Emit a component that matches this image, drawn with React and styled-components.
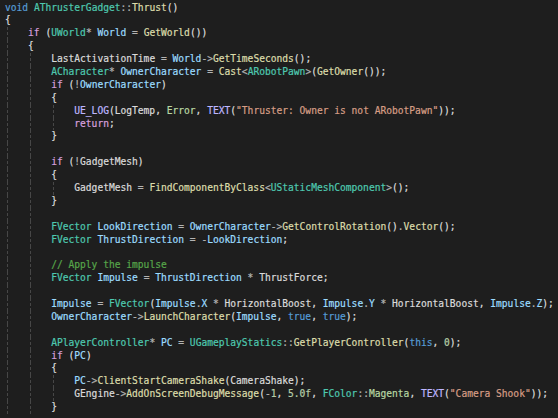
import React from 'react'
import styled, { createGlobalStyle } from 'styled-components'

const GlobalStyle = createGlobalStyle`
  html, body {
    margin: 0;
    padding: 0;
    background: #1e1e1e;
  }
`

const colors = {
  keyword: '#569cd6',
  control: '#d8a0df',
  type: '#4ec9b0',
  func: '#dcdcaa',
  local: '#9cdcfe',
  member: '#dadada',
  macro: '#beb7ff',
  enum: '#b8d7a3',
  string: '#d69d85',
  number: '#b5cea8',
  comment: '#57a64a',
  op: '#b4b4b4',
  punct: '#dcdcdc',
  plain: '#dcdcdc'
}

const Editor = styled.div`
  width: 558px;
  height: 418px;
  overflow: hidden;
  box-sizing: border-box;
  padding: 1.5px 0 0 5px;
  background: #1e1e1e;
  font-family: 'DejaVu Sans Mono', 'Liberation Mono', monospace;
  font-size: 9.6px;
  line-height: 12.9px;
  white-space: pre;
  -webkit-text-stroke: 0.2px;
`

const Line = styled.div`
  display: flex;
  height: 12.9px;
`

const Indent = styled.span`
  flex: none;
  width: 4ch;
  background-image: repeating-linear-gradient(to bottom, #474747 0 3px, transparent 3px 5px);
  background-size: 1px 100%;
  background-position: 2px 0;
  background-repeat: no-repeat;
`

const Token = styled.span`
  color: ${p => colors[p.$kind] || colors.plain};
`

const keywords = ['void', 'true', 'this']
const control = ['if', 'return']
const types = ['AThrusterGadget', 'UWorld', 'ACharacter', 'ARobotPawn', 'UStaticMeshComponent', 'FVector', 'APlayerController', 'UGameplayStatics', 'FColor']
const macros = ['UE_LOG', 'TEXT']
const enums = ['Error', 'Magenta']
const locals = ['World', 'OwnerCharacter', 'LookDirection', 'ThrustDirection', 'Impulse', 'PC', 'X', 'Y', 'Z']
const members = ['LastActivationTime', 'GadgetMesh', 'ThrustForce', 'HorizontalBoost', 'CameraShake', 'LogTemp', 'GEngine']

// very small tokenizer, just enough for this snippet
const tokenize = src => {
  const out = []
  const re = /(\/\/.*$)|("[^"]*")|(\d+(?:\.\d+)?f?)|([A-Za-z_]\w*)|(->|::|[=*!<>\-.])|([(){};,])|(\s+)/g
  let m
  while ((m = re.exec(src))) {
    const [text, comment, str, num, word, op, punct] = m
    let kind = 'plain'
    if (comment) kind = 'comment'
    else if (str) kind = 'string'
    else if (num) kind = 'number'
    else if (word) {
      const next = src[re.lastIndex]
      if (keywords.includes(word)) kind = 'keyword'
      else if (control.includes(word)) kind = 'control'
      else if (types.includes(word)) kind = 'type'
      else if (macros.includes(word)) kind = 'macro'
      else if (enums.includes(word)) kind = 'enum'
      else if (locals.includes(word)) kind = 'local'
      else if (members.includes(word)) kind = 'member'
      else if (next === '(' || next === '<') kind = 'func'
      else kind = 'member'
    } else if (op) kind = 'op'
    else if (punct) kind = 'punct'
    out.push({ text, kind })
  }
  return out
}

const code = [
  [0, 'void AThrusterGadget::Thrust()'],
  [0, '{'],
  [1, 'if (UWorld* World = GetWorld())'],
  [1, '{'],
  [2, 'LastActivationTime = World->GetTimeSeconds();'],
  [2, 'ACharacter* OwnerCharacter = Cast<ARobotPawn>(GetOwner());'],
  [2, 'if (!OwnerCharacter)'],
  [2, '{'],
  [3, 'UE_LOG(LogTemp, Error, TEXT("Thruster: Owner is not ARobotPawn"));'],
  [3, 'return;'],
  [2, '}'],
  [2, ''],
  [2, 'if (!GadgetMesh)'],
  [2, '{'],
  [3, 'GadgetMesh = FindComponentByClass<UStaticMeshComponent>();'],
  [2, '}'],
  [2, ''],
  [2, 'FVector LookDirection = OwnerCharacter->GetControlRotation().Vector();'],
  [2, 'FVector ThrustDirection = -LookDirection;'],
  [2, ''],
  [2, '// Apply the impulse'],
  [2, 'FVector Impulse = ThrustDirection * ThrustForce;'],
  [2, ''],
  [2, 'Impulse = FVector(Impulse.X * HorizontalBoost, Impulse.Y * HorizontalBoost, Impulse.Z);'],
  [2, 'OwnerCharacter->LaunchCharacter(Impulse, true, true);'],
  [2, ''],
  [2, 'APlayerController* PC = UGameplayStatics::GetPlayerController(this, 0);'],
  [2, 'if (PC)'],
  [2, '{'],
  [3, 'PC->ClientStartCameraShake(CameraShake);'],
  [3, 'GEngine->AddOnScreenDebugMessage(-1, 5.0f, FColor::Magenta, TEXT("Camera Shook"));'],
  [2, '}']
]

export default function App() {
  return (
    <>
      <GlobalStyle />
      <Editor>
        {code.map(([level, src], i) => (
          <Line key={i}>
            {Array.from({ length: level }).map((_, j) => <Indent key={j} />)}
            {tokenize(src).map((t, j) => (
              <Token key={j} $kind={t.kind}>{t.text}</Token>
            ))}
          </Line>
        ))}
      </Editor>
    </>
  )
}
